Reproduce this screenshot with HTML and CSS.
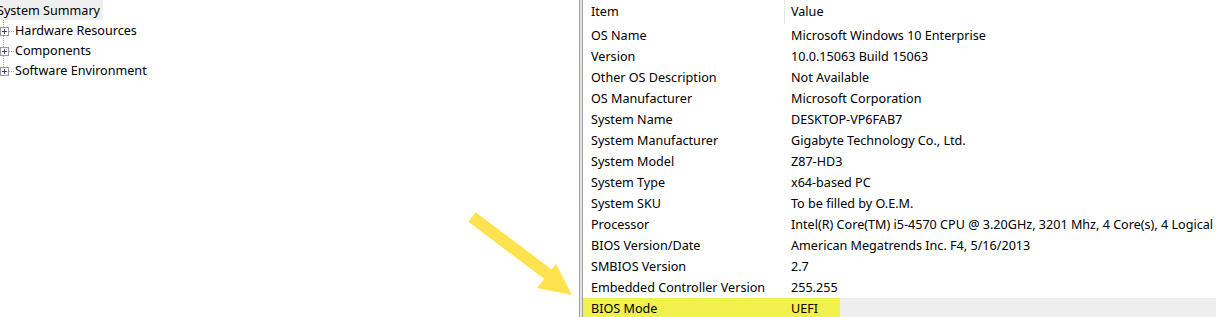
FILE: index.html
```html
<!DOCTYPE html>
<html>
<head>
<meta charset="utf-8">
<link rel="stylesheet" href="styles.css">
</head>
<body>
<div class="app">
  <div class="tree">
    <div class="root"><span class="root-label">System Summary</span></div>
    <div class="branch">
      <div class="node"><span class="plus"></span><span class="dots"></span><span class="label">Hardware Resources</span></div>
      <div class="node"><span class="plus"></span><span class="dots"></span><span class="label">Components</span></div>
      <div class="node"><span class="plus"></span><span class="dots"></span><span class="label">Software Environment</span></div>
    </div>
  </div>
  <div class="splitter"></div>
  <div class="list">
    <div class="row head"><div class="c1">Item</div><div class="c2">Value</div></div>
    <div class="row"><div class="c1">OS Name</div><div class="c2">Microsoft Windows 10 Enterprise</div></div>
    <div class="row"><div class="c1">Version</div><div class="c2">10.0.15063 Build 15063</div></div>
    <div class="row"><div class="c1">Other OS Description</div><div class="c2">Not Available</div></div>
    <div class="row"><div class="c1">OS Manufacturer</div><div class="c2">Microsoft Corporation</div></div>
    <div class="row"><div class="c1">System Name</div><div class="c2">DESKTOP-VP6FAB7</div></div>
    <div class="row"><div class="c1">System Manufacturer</div><div class="c2">Gigabyte Technology Co., Ltd.</div></div>
    <div class="row"><div class="c1">System Model</div><div class="c2">Z87-HD3</div></div>
    <div class="row"><div class="c1">System Type</div><div class="c2">x64-based PC</div></div>
    <div class="row"><div class="c1">System SKU</div><div class="c2">To be filled by O.E.M.</div></div>
    <div class="row"><div class="c1">Processor</div><div class="c2">Intel(R) Core(TM) i5-4570 CPU @ 3.20GHz, 3201 Mhz, 4 Core(s), 4 Logical</div></div>
    <div class="row"><div class="c1">BIOS Version/Date</div><div class="c2">American Megatrends Inc. F4, 5/16/2013</div></div>
    <div class="row"><div class="c1">SMBIOS Version</div><div class="c2">2.7</div></div>
    <div class="row"><div class="c1">Embedded Controller Version</div><div class="c2">255.255</div></div>
    <div class="row selected"><div class="mark"><div class="c1">BIOS Mode</div><div class="c2">UEFI</div></div></div>
  </div>
  <svg class="arrow" width="120" height="100" viewBox="0 0 120 100">
    <line x1="4" y1="17" x2="85" y2="78" stroke="#ffe24f" stroke-width="12"/>
    <polygon points="88,64 69,88 104,95" fill="#ffe24f"/>
  </svg>
</div>
</body>
</html>
```
FILE: styles.css
```css
html, body {
  margin: 0;
  padding: 0;
  background: #ffffff;
}
.app {
  position: relative;
  display: flex;
  width: 1216px;
  height: 317px;
  overflow: hidden;
  font-family: "Noto Sans", "Open Sans", sans-serif;
  font-size: 12.6px;
  color: #000;
}
.tree {
  width: 579px;
  flex: none;
  overflow: hidden;
}
.root {
  height: 20px;
  display: flex;
  align-items: flex-start;
}
.root-label {
  margin-left: -3px;
  padding: 0 3px 0 0;
  height: 20px;
  line-height: 21px;
  background: #efefef;
}
.branch {
  margin-left: 3px;
  padding-top: 1px;
  border-left: 1px dotted #a0a0a0;
  height: 50px;
}
.node {
  height: 20px;
  display: flex;
  align-items: center;
  margin-left: -4px;
}
.plus {
  position: relative;
  width: 7px;
  height: 7px;
  border: 1px solid #9a9a9a;
  background: #fff;
  flex: none;
}
.plus::before, .plus::after {
  content: "";
  position: absolute;
  background: #3a3a9a;
}
.plus::before { left: 1px; top: 3px; width: 5px; height: 1px; }
.plus::after { left: 3px; top: 1px; width: 1px; height: 5px; }
.dots {
  width: 5px;
  border-top: 1px dotted #a0a0a0;
  margin-right: 1px;
}
.label {
  line-height: 20px;
}
.splitter {
  width: 2px;
  flex: none;
  border-left: 1px solid #a0a0a0;
  border-right: 1px solid #a0a0a0;
  background: #e3e3e3;
}
.list {
  flex: 1;
  min-width: 0;
}
.row {
  display: flex;
  height: 21px;
  align-items: center;
  white-space: nowrap;
}
.row.head {
  height: 25px;
}
.c1 {
  width: 201px;
  flex: none;
  padding-left: 8px;
  box-sizing: border-box;
}
.c2 {
  padding-left: 7px;
}
.head .c2 {
  border-left: 1px solid #e5e5e5;
  height: 24px;
  line-height: 24px;
  padding-left: 6px;
  align-self: flex-start;
}
.head .c1 {
  line-height: 24px;
  align-self: flex-start;
}
.selected {
  background: #eeeeee;
}
.mark {
  display: flex;
  align-items: center;
  height: 21px;
  width: 257px;
  background: #f1f14e;
}
.arrow {
  position: absolute;
  left: 468px;
  top: 200px;
}
```
